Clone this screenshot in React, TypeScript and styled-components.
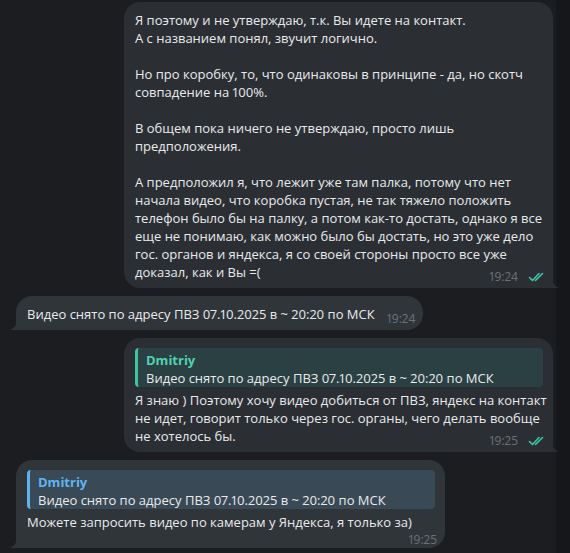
import styled, { createGlobalStyle } from "styled-components";

const GlobalStyle = createGlobalStyle`
  html, body {
    margin: 0;
    padding: 0;
    background: #1b1d21;
  }
  body {
    font-family: "Open Sans", "Liberation Sans", sans-serif;
    -webkit-font-smoothing: antialiased;
  }
`;

const Page = styled.div`
  display: flex;
  width: 570px;
  height: 553px;
  overflow: hidden;
`;

const ChatColumn = styled.div`
  width: 556px;
  display: flex;
  flex-direction: column;
  gap: 8px;
  padding-top: 2px;
`;

const ScrollStrip = styled.div`
  flex: 1;
  background: #15171a;
`;

const Row = styled.div<{ $out?: boolean }>`
  display: flex;
  justify-content: ${(p) => (p.$out ? "flex-end" : "flex-start")};
  padding: ${(p) => (p.$out ? "0 3px 0 0" : "0 0 0 16px")};
`;

const Bubble = styled.div<{ $out?: boolean; $width?: number }>`
  position: relative;
  box-sizing: border-box;
  width: ${(p) => (p.$width ? `${p.$width}px` : "auto")};
  background: ${(p) => (p.$out ? "#2b2f33" : "#30353a")};
  border-radius: ${(p) => (p.$out ? "16px 16px 0 16px" : "16px 16px 16px 0")};
  padding: 9px 8px 7px 11px;
  color: #e9eaec;
  font-size: 13px;
  line-height: 18px;
  font-variant-numeric: proportional-nums;
`;

const Tail = styled.svg<{ $out?: boolean }>`
  position: absolute;
  bottom: 0;
  width: 7px;
  height: 11px;
  ${(p) => (p.$out ? "right: -6px;" : "left: -6px; transform: scaleX(-1);")}
`;

const Text = styled.div`
  white-space: pre;
`;

const LastLine = styled.div`
  display: flex;
  align-items: flex-end;
  justify-content: space-between;
`;

const Meta = styled.div`
  display: flex;
  align-items: center;
  gap: 10px;
  margin-left: 12px;
  margin-bottom: -3px;
  font-size: 12px;
  line-height: 14px;
  color: #6c7278;
  flex-shrink: 0;
`;

const MetaLine = styled.div`
  display: flex;
  justify-content: flex-end;
  margin-top: 2px;
  margin-bottom: -3px;
`;

const Quote = styled.div<{ $out?: boolean }>`
  background: ${(p) => (p.$out ? "#2b4043" : "#394955")};
  border-left: 3px solid ${(p) => (p.$out ? "#3cc4a5" : "#5db3ea")};
  border-radius: 4px;
  padding: 3px 8px 0 8px;
  margin: 1px 2px 4px 0;
`;

const QuoteName = styled.div<{ $out?: boolean }>`
  font-weight: 700;
  color: ${(p) => (p.$out ? "#4fd3b2" : "#5fb6f0")};
`;

const QuoteText = styled.div`
  white-space: pre;
`;

const TailShape = ({ out, color }: { out?: boolean; color: string }) => (
  <Tail $out={out} viewBox="0 0 7 11">
    <path d="M0 0 C0 6 3 9.5 7 11 L0 11 Z" fill={color} />
  </Tail>
);

const Checks = () => (
  <svg width="17" height="10" viewBox="0 0 17 10">
    <path
      d="M1.5 5.5 L4.5 8.5 L11 1.5 M7.5 8.5 L14.5 1.5"
      fill="none"
      stroke="#3fc6a9"
      strokeWidth="1.6"
      strokeLinecap="round"
      strokeLinejoin="round"
    />
  </svg>
);

const first = [
  "Я поэтому и не утверждаю, т.к. Вы идете на контакт.",
  "А с названием понял, звучит логично.",
  "",
  "Но про коробку, то, что одинаковы в принципе - да, но скотч",
  "совпадение на 100%.",
  "",
  "В общем пока ничего не утверждаю, просто лишь",
  "предположения.",
  "",
  "А предположил я, что лежит уже там палка, потому что нет",
  "начала видео, что коробка пустая, не так тяжело положить",
  "телефон было бы на палку, а потом как-то достать, однако я все",
  "еще не понимаю, как можно было бы достать, но это уже дело",
  "гос. органов и яндекса, я со своей стороны просто все уже",
].join("\n");

const quoted = "Видео снято по адресу ПВЗ 07.10.2025 в ~ 20:20 по МСК";

export default function App() {
  return (
    <>
      <GlobalStyle />
      <Page>
        <ChatColumn>
          <Row $out>
            <Bubble $out $width={429}>
              <Text>{first}</Text>
              <LastLine>
                <Text>доказал, как и Вы =(</Text>
                <Meta>
                  <span>19:24</span>
                  <Checks />
                </Meta>
              </LastLine>
              <TailShape out color="#2b2f33" />
            </Bubble>
          </Row>

          <Row>
            <Bubble>
              <LastLine>
                <Text>{quoted}</Text>
                <Meta>
                  <span>19:24</span>
                </Meta>
              </LastLine>
              <TailShape color="#30353a" />
            </Bubble>
          </Row>

          <Row $out>
            <Bubble $out $width={429}>
              <Quote $out>
                <QuoteName $out>Dmitriy</QuoteName>
                <QuoteText>{quoted}</QuoteText>
              </Quote>
              <Text>
                {"Я знаю ) Поэтому хочу видео добиться от ПВЗ, яндекс на контакт\nне идет, говорит только через гос. органы, чего делать вообще"}
              </Text>
              <LastLine>
                <Text>не хотелось бы.</Text>
                <Meta>
                  <span>19:25</span>
                  <Checks />
                </Meta>
              </LastLine>
              <TailShape out color="#2b2f33" />
            </Bubble>
          </Row>

          <Row>
            <Bubble $width={429}>
              <Quote>
                <QuoteName>Dmitriy</QuoteName>
                <QuoteText>{quoted}</QuoteText>
              </Quote>
              <Text>Можете запросить видео по камерам у Яндекса, я только за)</Text>
              <MetaLine>
                <Meta>
                  <span>19:25</span>
                </Meta>
              </MetaLine>
              <TailShape color="#30353a" />
            </Bubble>
          </Row>
        </ChatColumn>
        <ScrollStrip />
      </Page>
    </>
  );
}
